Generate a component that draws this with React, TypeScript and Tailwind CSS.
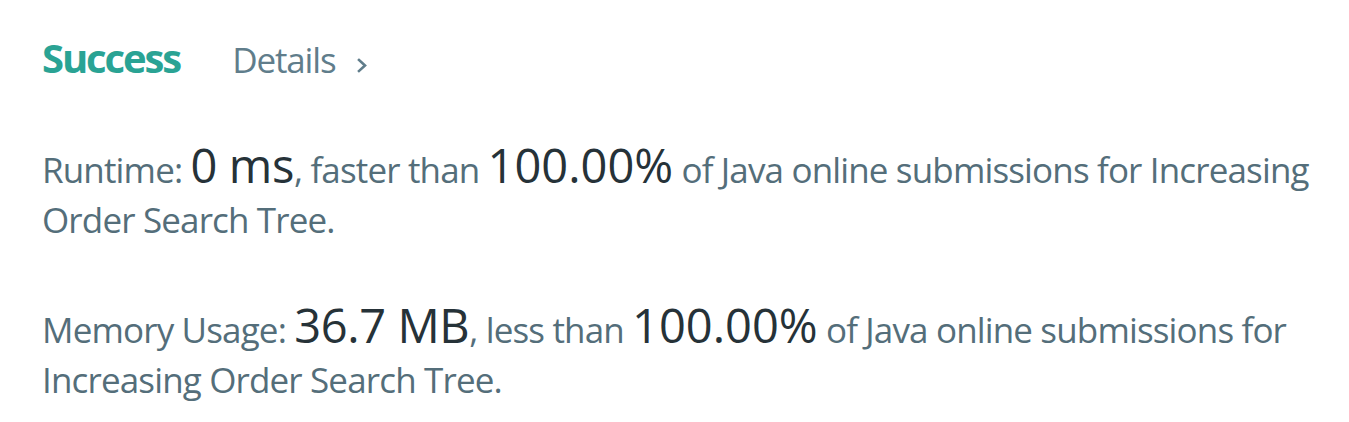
const FONT = "font-['Segoe_UI','Open_Sans',sans-serif]";

function Stat({
  label,
  value,
  compare,
  percent,
}: {
  label: string;
  value: string;
  compare: string;
  percent: string;
}) {
  return (
    <p className="text-[35px] leading-[50px] tracking-[-0.85px] text-[#546e7a]">
      {label}:{" "}
      <span className="text-[47px] leading-[40px] tracking-[-0.4px] text-[#263238]">{value}</span>, {compare}{" "}
      <span className="text-[47px] leading-[40px] tracking-[0px] text-[#263238]">{percent}</span> of Java online
      submissions for Increasing Order Search Tree.
    </p>
  );
}

export default function App() {
  return (
    <div className={`min-h-screen bg-white pl-[42px] pr-[24px] pt-[33px] ${FONT}`}>
      {/* Result header */}
      <div className="flex items-baseline h-[50px] leading-[50px]">
        <span className="text-[40px] font-bold tracking-[-2.1px] text-[#2aa394]">Success</span>
        <a className="ml-[52px] flex items-baseline text-[35px] tracking-[-1.15px] text-[#607d8b]">
          Details
          <svg
            viewBox="0 0 10 15"
            className="ml-[22px] w-[10px] h-[15px]"
            fill="none"
            stroke="currentColor"
            strokeWidth="2.6"
            strokeLinecap="square"
          >
            <polyline points="2,2 8,7.5 2,13" />
          </svg>
        </a>
      </div>

      <div className="mt-[62px] flex flex-col gap-[60px] max-w-[1283px]">
        <Stat label="Runtime" value="0 ms" compare="faster than" percent="100.00%" />
        <Stat label="Memory Usage" value="36.7 MB" compare="less than" percent="100.00%" />
      </div>
    </div>
  );
}
